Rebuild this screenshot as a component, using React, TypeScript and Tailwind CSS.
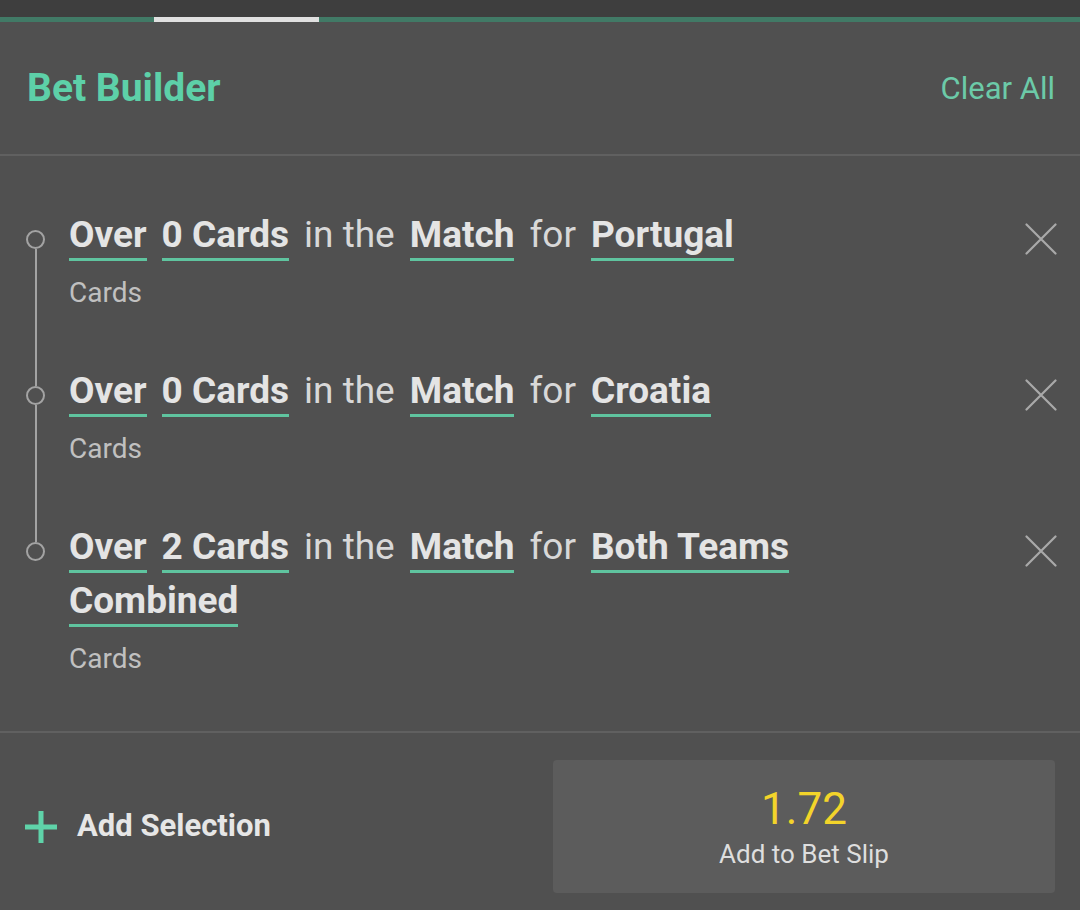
type Token = { text: string; pick?: boolean };

const selections: { id: number; tokens: Token[]; market: string }[] = [
  {
    id: 1,
    tokens: [
      { text: 'Over', pick: true },
      { text: '0 Cards', pick: true },
      { text: 'in the' },
      { text: 'Match', pick: true },
      { text: 'for' },
      { text: 'Portugal', pick: true },
    ],
    market: 'Cards',
  },
  {
    id: 2,
    tokens: [
      { text: 'Over', pick: true },
      { text: '0 Cards', pick: true },
      { text: 'in the' },
      { text: 'Match', pick: true },
      { text: 'for' },
      { text: 'Croatia', pick: true },
    ],
    market: 'Cards',
  },
  {
    id: 3,
    tokens: [
      { text: 'Over', pick: true },
      { text: '2 Cards', pick: true },
      { text: 'in the' },
      { text: 'Match', pick: true },
      { text: 'for' },
      { text: 'Both Teams', pick: true },
      { text: 'Combined', pick: true },
    ],
    market: 'Cards',
  },
];

function CloseIcon() {
  return (
    <svg width="32" height="32" viewBox="0 0 32 32" className="text-[#a9a9a9]">
      <path d="M1.5 1.5L30.5 30.5M30.5 1.5L1.5 30.5" stroke="currentColor" strokeWidth="2.2" strokeLinecap="round" />
    </svg>
  );
}

function PlusIcon() {
  return (
    <svg width="32" height="32" viewBox="0 0 32 32" className="text-[#5fd3a9]">
      <path d="M16 0V32M0 16H32" stroke="currentColor" strokeWidth="5" />
    </svg>
  );
}

function SelectionRow({ tokens, market, first, last }: { tokens: Token[]; market: string; first: boolean; last: boolean }) {
  return (
    <div className="flex">
      <div className="w-[69px] pl-[2px] flex flex-col items-center shrink-0">
        <div className={`w-[2px] h-[15px] ${first ? 'bg-transparent' : 'bg-[#a3a3a3]'}`} />
        <div className="w-[19px] h-[19px] rounded-full border-[2.5px] border-[#a3a3a3] shrink-0" />
        <div className={`w-[2px] flex-1 ${last ? 'bg-transparent' : 'bg-[#a3a3a3]'}`} />
      </div>
      <div className={`flex-1 min-w-0 ${last ? '' : 'pb-[62px]'}`}>
        <div className="flex flex-wrap gap-x-[15px] gap-y-[8px] text-[37px]">
          {tokens.map((tk, i) => (
            <span
              key={i}
              className={`inline-block whitespace-nowrap leading-[40px] pb-[3px] border-b-[3px] ${
                tk.pick ? 'border-[#5fc49f] font-bold text-[#e4e4e4]' : 'border-transparent text-[#d8d8d8]'
              }`}
            >
              {tk.text}
            </span>
          ))}
        </div>
        <div className="mt-[16px] text-[28px] leading-[32px] text-[#c0c0c0]">{market}</div>
      </div>
      <div className="w-[150px] shrink-0 flex justify-end pr-[23px] pt-[8px]">
        <CloseIcon />
      </div>
    </div>
  );
}

export default function App() {
  return (
    <div className="min-h-[910px] bg-[#505050] font-['Roboto',sans-serif]">
      <div className="h-[17px] bg-[#3e3e3e]" />
      <div className="h-[5px] bg-[#417a66] flex">
        <div className="w-[154px]" />
        <div className="w-[165px] bg-[#e0e0e0]" />
      </div>

      <div className="h-[132px] flex items-center justify-between pl-[27px] pr-[25px]">
        <h1 className="text-[39px] font-bold text-[#5dd0a8] leading-none">Bet Builder</h1>
        <button className="text-[31px] text-[#6ccaa8] leading-none">Clear All</button>
      </div>
      <div className="h-[2px] bg-[#606060]" />

      <div className="pt-[59px] pb-[56px]">
        {selections.map((s, i) => (
          <SelectionRow
            key={s.id}
            tokens={s.tokens}
            market={s.market}
            first={i === 0}
            last={i === selections.length - 1}
          />
        ))}
      </div>
      <div className="h-[2px] bg-[#606060]" />

      <div className="flex items-center justify-between pl-[25px] pr-[25px] pt-[27px] pb-[17px]">
        <button className="flex items-center gap-[20px]">
          <PlusIcon />
          <span className="text-[31px] font-bold text-[#e6e6e6]">Add Selection</span>
        </button>
        <button className="w-[502px] h-[133px] rounded-[4px] bg-[#5c5c5c] flex flex-col items-center justify-center gap-[6px]">
          <span className="text-[44px] leading-[48px] text-[#f3d42a]">1.72</span>
          <span className="text-[26px] leading-[30px] text-[#dedede]">Add to Bet Slip</span>
        </button>
      </div>
    </div>
  );
}
